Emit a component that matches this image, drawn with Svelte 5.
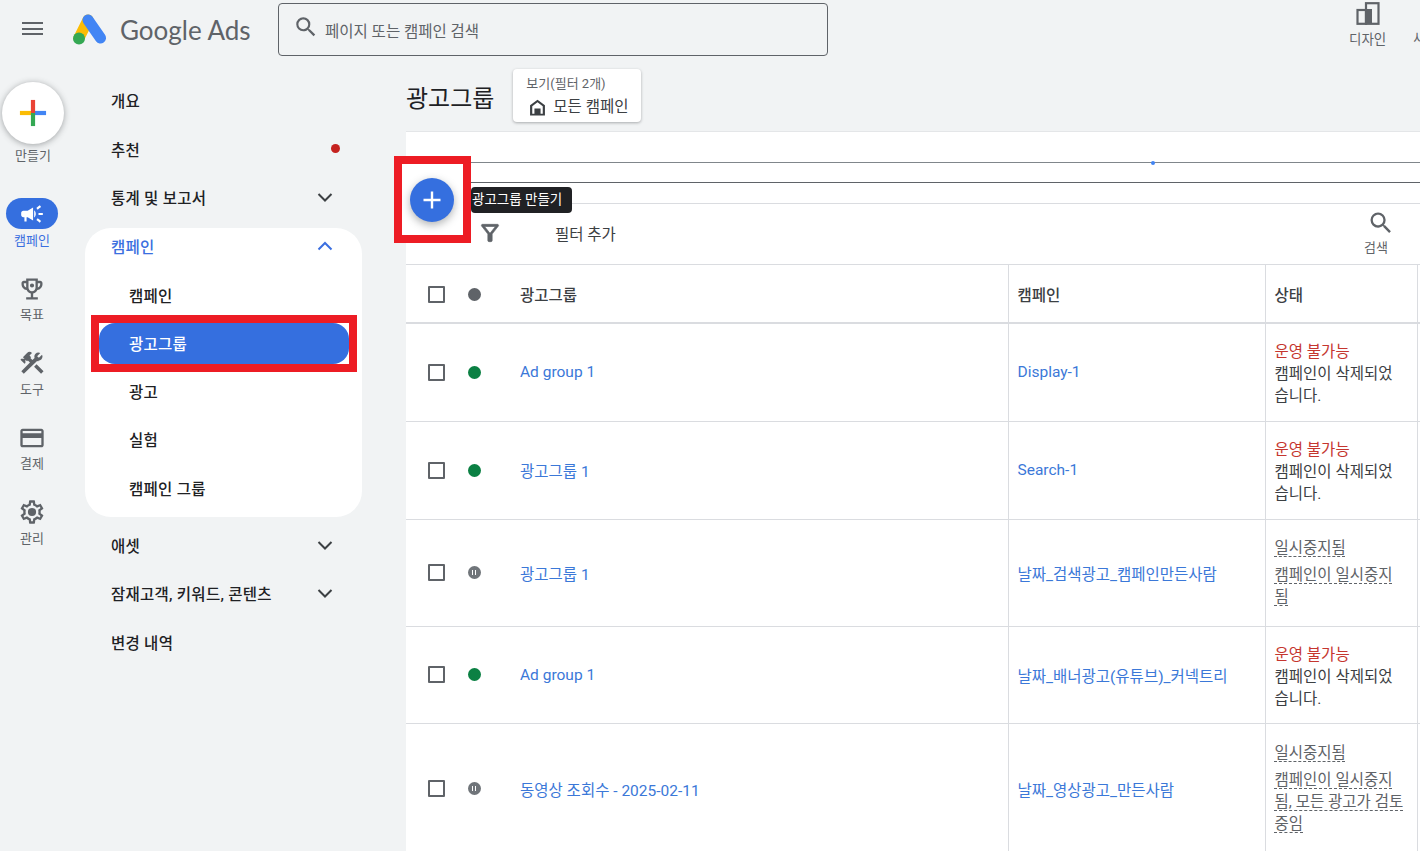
<script>
  const railItems = [
    { label: "목표", icon: "trophy" },
    { label: "도구", icon: "tools" },
    { label: "결제", icon: "card" },
    { label: "관리", icon: "gear" },
  ];

  const icons = {
    search: "M15.5 14h-.79l-.28-.27A6.47 6.47 0 0 0 16 9.5 6.5 6.5 0 1 0 9.5 16c1.61 0 3.09-.59 4.23-1.57l.27.28v.79l5 4.99L20.49 19l-4.99-5zm-6 0C7.01 14 5 11.99 5 9.5S7.01 5 9.5 5 14 7.01 14 9.5 11.99 14 9.5 14z",
    campaign: "M18 11v2h4v-2h-4zm-2 6.61c.96.71 2.21 1.65 3.2 2.39.4-.53.8-1.07 1.2-1.6-.99-.74-2.24-1.68-3.2-2.4-.4.54-.8 1.08-1.2 1.61zM20.4 5.6c-.4-.53-.8-1.07-1.2-1.6-.99.74-2.24 1.68-3.2 2.4.4.53.8 1.07 1.2 1.6.96-.72 2.21-1.65 3.2-2.4zM4 9c-1.1 0-2 .9-2 2v2c0 1.1.9 2 2 2h1v4h2v-4h1l5 3V6L8 9H4zm11.5 3c0-1.33-.58-2.53-1.5-3.35v6.69c.92-.81 1.5-2.01 1.5-3.34z",
    trophy: "M19 5h-2V3H7v2H5c-1.1 0-2 .9-2 2v1c0 2.55 1.92 4.63 4.39 4.94.63 1.5 1.98 2.63 3.61 2.96V19H7v2h10v-2h-4v-3.1c1.63-.33 2.98-1.46 3.61-2.96C19.08 12.63 21 10.55 21 8V7c0-1.1-.9-2-2-2zM5 8V7h2v3.82C5.84 10.4 5 9.3 5 8zm7 6c-1.65 0-3-1.35-3-3V5h6v6c0 1.65-1.35 3-3 3zm7-6c0 1.3-.84 2.4-2 2.82V7h2v1zM12 7.2a1.8 1.8 0 1 0 0 3.6 1.8 1.8 0 0 0 0-3.6z",
    tools: "M13.78 15.3l6 6 2.11-2.16-6-6zM17.5 10c1.93 0 3.5-1.57 3.5-3.5 0-.58-.16-1.12-.41-1.6l-2.7 2.7-1.49-1.49 2.7-2.7c-.48-.25-1.02-.41-1.6-.41C15.57 3 14 4.57 14 6.5c0 .41.08.8.21 1.16l-1.85 1.85-1.78-1.78.71-.71-1.41-1.41L12 3.49a3 3 0 0 0-4.24 0L4.22 7.03l1.41 1.41H2.81l-.71.71 3.54 3.54.71-.71V9.15l1.41 1.41.71-.71 1.78 1.78-7.41 7.41 2.12 2.12L16.34 10.3c.36.13.75.2 1.16.2z",
    card: "M20 4H4c-1.11 0-1.99.89-1.99 2L2 18c0 1.11.89 2 2 2h16c1.11 0 2-.89 2-2V6c0-1.11-.89-2-2-2zm0 14H4v-6h16v6zm0-10H4V6h16v2z",
    gear: "M19.43 12.98c.04-.32.07-.64.07-.98 0-.34-.03-.66-.07-.98l2.11-1.65c.19-.15.24-.42.12-.64l-2-3.46c-.09-.16-.26-.25-.44-.25-.06 0-.12.01-.17.03l-2.49 1c-.52-.4-1.08-.73-1.69-.98l-.38-2.65C14.46 2.18 14.25 2 14 2h-4c-.25 0-.46.18-.49.42l-.38 2.65c-.61.25-1.17.59-1.69.98l-2.49-1c-.06-.02-.12-.03-.18-.03-.17 0-.34.09-.43.25l-2 3.46c-.13.22-.07.49.12.64l2.11 1.65c-.04.32-.07.65-.07.98 0 .33.03.66.07.98l-2.11 1.65c-.19.15-.24.42-.12.64l2 3.46c.09.16.26.25.44.25.06 0 .12-.01.17-.03l2.49-1c.52.4 1.08.73 1.69.98l.38 2.65c.03.24.24.42.49.42h4c.25 0 .46-.18.49-.42l.38-2.65c.61-.25 1.17-.59 1.69-.98l2.49 1c.06.02.12.03.18.03.17 0 .34-.09.43-.25l2-3.46c.12-.22.07-.49-.12-.64l-2.11-1.65zm-1.98-1.71c.04.31.05.52.05.73 0 .21-.02.43-.05.73l-.14 1.13.89.7 1.08.84-.7 1.21-1.27-.51-1.04-.42-.9.68c-.43.32-.84.56-1.25.73l-1.06.43-.16 1.13-.2 1.35h-1.4l-.19-1.35-.16-1.13-1.06-.43c-.43-.18-.83-.41-1.23-.71l-.91-.7-1.06.43-1.27.51-.7-1.21 1.08-.84.89-.7-.14-1.13c-.03-.31-.05-.54-.05-.74s.02-.43.05-.73l.14-1.13-.89-.7-1.08-.84.7-1.21 1.27.51 1.04.42.9-.68c.43-.32.84-.56 1.25-.73l1.06-.43.16-1.13.2-1.35h1.39l.19 1.35.16 1.13 1.06.43c.43.18.83.41 1.23.71l.91.7 1.06-.43 1.27-.51.7 1.21-1.07.85-.89.7.14 1.13zM12 8.500a3.500 3.500 0 1 0 0 7 3.500 3.500 0 0 0 0-7z",
    funnel: "M7 6h10l-5.01 6.3L7 6zm-2.75-.39C6.27 8.2 10 13 10 13v6c0 .55.45 1 1 1h2c.55 0 1-.45 1-1v-6s3.72-4.8 5.74-7.39A1 1 0 0 0 18.95 4H5.04c-.83 0-1.3.95-.79 1.61z",
    home: "M12 3L3.5 9.5V21h17V9.500L12 3zM6 19v-8.300L12 6l6 4.700V19h-2.500v-6h-7v6z",
  };

  const topNav = [
    { label: "개요" },
    { label: "추천", dot: true },
    { label: "통계 및 보고서", chevron: true },
  ];
  const subNav = ["캠페인", "광고그룹", "광고", "실험", "캠페인 그룹"];
  const bottomNav = [
    { label: "애셋", chevron: true },
    { label: "잠재고객, 키워드, 콘텐츠", chevron: true },
    { label: "변경 내역" },
  ];

  const removed = { kind: "bad", title: "운영 불가능", lines: ["캠페인이 삭제되었습니다."] };
  const rows = [
    { h: 98, state: "on", name: "Ad group 1", campaign: "Display-1", status: removed },
    { h: 98, state: "on", name: "광고그룹 1", campaign: "Search-1", status: removed },
    { h: 107, state: "pause", name: "광고그룹 1", campaign: "날짜_검색광고_캠페인만든사람",
      status: { kind: "paused", title: "일시중지됨", lines: ["캠페인이 일시중지됨"] } },
    { h: 97, state: "on", name: "Ad group 1", campaign: "날짜_배너광고(유튜브)_커넥트리", status: removed },
    { h: 131, state: "pause", name: "동영상 조회수 - 2025-02-11", campaign: "날짜_영상광고_만든사람",
      status: { kind: "paused", title: "일시중지됨", lines: ["캠페인이 일시중지됨, 모든 광고가 검토 중임"] } },
  ];
</script>

{#snippet icon(name, size, cls = "")}
  <svg class={cls} width={size} height={size} viewBox="0 0 24 24" fill="currentColor" fill-rule="evenodd" aria-hidden="true"><path d={icons[name]} /></svg>
{/snippet}

{#snippet chevron(up = false)}
  <svg class="chev" width="18" height="18" viewBox="0 0 18 18" fill="none" stroke="currentColor" stroke-width="2"><path d={up ? "M2.5 12.5 9 6l6.5 6.5" : "M2.5 6 9 12.5 15.5 6"} /></svg>
{/snippet}

<div class="page">
  <header class="topbar">
    <button class="menu" aria-label="메뉴"><span></span><span></span><span></span></button>
    <svg class="logo" width="34" height="31" viewBox="0 0 34 31">
      <path d="M15 6 6 24" stroke="#fbbc04" stroke-width="11" stroke-linecap="round" />
      <path d="M15 6l12.5 18" stroke="#4285f4" stroke-width="11" stroke-linecap="round" />
      <circle cx="6" cy="24.500" r="6" fill="#34a853" />
    </svg>
    <div class="brand">Google Ads</div>
    <div class="searchbox">
      {@render icon("search", 26, "search-ico")}
      <span>페이지 또는 캠페인 검색</span>
    </div>
    <div class="top-actions">
      <div class="top-action">
        <svg width="24" height="23" viewBox="0 0 24 23" fill="none" stroke="#5f6368" stroke-width="2.200">
          <rect x="10" y="1.200" width="12.500" height="20.600" />
          <rect x="1.500" y="8" width="8.500" height="13.800" />
          <rect x="10" y="7" width="6" height="15" fill="#5f6368" stroke="none" />
        </svg>
        <span>디자인</span>
      </div>
      <div class="top-action cut"><span>새로고침</span></div>
    </div>
  </header>

  <div class="body">
    <aside class="rail">
      <button class="create" aria-label="만들기">
        <svg width="28" height="28" viewBox="0 0 30 30" stroke-width="4.500">
          <path d="M1 15h14" stroke="#fbbc04" />
          <path d="M15 15h14" stroke="#4285f4" />
          <path d="M15 1v14" stroke="#ea4335" />
          <path d="M15 15v14" stroke="#34a853" />
        </svg>
      </button>
      <div class="create-label">만들기</div>
      <div class="rail-item active">
        <div class="pill">{@render icon("campaign", 26)}</div>
        <span>캠페인</span>
      </div>
      {#each railItems as item}
        <div class="rail-item">
          <div class="pill">{@render icon(item.icon, 28)}</div>
          <span>{item.label}</span>
        </div>
      {/each}
    </aside>

    <nav class="nav">
      {#each topNav as item}
        <div class="nav-item">
          <span>{item.label}</span>
          {#if item.dot}<i class="red-dot"></i>{/if}
          {#if item.chevron}{@render chevron()}{/if}
        </div>
      {/each}
      <div class="panel">
        <div class="panel-head">
          <span>캠페인</span>
          {@render chevron(true)}
        </div>
        {#each subNav as label}
          <div class="sub-item" class:selected={label === "광고그룹"}>
            <span>{label}</span>
          </div>
        {/each}
      </div>
      {#each bottomNav as item}
        <div class="nav-item">
          <span>{item.label}</span>
          {#if item.chevron}{@render chevron()}{/if}
        </div>
      {/each}
    </nav>

    <main class="main">
      <div class="title-row">
        <h1>광고그룹</h1>
        <button class="view-btn">
          <span class="view-small">보기(필터 2개)</span>
          <span class="view-big">{@render icon("home", 21)}모든 캠페인</span>
        </button>
      </div>

      <section class="sheet">
        <div class="chart">
          <div class="line"></div>
          <div class="line second"></div>
          <i class="chart-dot"></i>
        </div>
        <div class="filter-row">
          {@render icon("funnel", 26, "funnel")}
          <span class="filter-add">필터 추가</span>
          <div class="table-search">
            {@render icon("search", 28, "search-shift")}
            <span>검색</span>
          </div>
        </div>

        <table>
          <colgroup>
            <col style="width:50px" />
            <col style="width:50px" />
            <col style="width:502px" />
            <col style="width:257px" />
            <col style="width:152px" />
            <col />
          </colgroup>
          <thead>
            <tr>
              <th><i class="check"></i></th>
              <th><i class="dot gray"></i></th>
              <th class="divide">광고그룹</th>
              <th class="divide">캠페인</th>
              <th class="divide">상태</th>
              <th></th>
            </tr>
          </thead>
          <tbody>
            {#each rows as row}
              <tr style="height:{row.h}px">
                <td><i class="check"></i></td>
                <td>
                  {#if row.state === "on"}
                    <i class="dot green"></i>
                  {:else}
                    <i class="dot pause"></i>
                  {/if}
                </td>
                <td class="divide"><span class="link">{row.name}</span></td>
                <td class="divide"><span class="link">{row.campaign}</span></td>
                <td class="divide status">
                  {#if row.status.kind === "bad"}
                    <div class="st-bad">{row.status.title}</div>
                    <div>{row.status.lines[0]}</div>
                  {:else}
                    <div class="st-paused-title"><span>{row.status.title}</span></div>
                    <div class="st-paused"><span>{row.status.lines[0]}</span></div>
                  {/if}
                </td>
                <td></td>
              </tr>
            {/each}
          </tbody>
        </table>
      </section>

      <div class="fab-mark"></div>
      <button class="fab" aria-label="광고그룹 만들기">
        <svg width="24" height="24" viewBox="0 0 24 24" fill="none" stroke="#fff" stroke-width="2.400"><path d="M12 3.500v17M3.500 12h17" /></svg>
      </button>
      <div class="tooltip">광고그룹 만들기</div>
    </main>
  </div>
</div>

<style>
  :global(body) {
    margin: 0;
    overflow: hidden;
    background: #f1f3f4;
  }

  .page {
    width: 1420px;
    height: 851px;
    overflow: hidden;
    background: #f1f3f4;
    color: #202124;
    font-family: Roboto, "Noto Sans CJK KR", sans-serif;
    font-size: 15.500px;
  }

  button {
    border: none;
    padding: 0;
    font: inherit;
    color: inherit;
    background: none;
  }

  .topbar {
    height: 68px;
    display: flex;
    align-items: flex-start;
    position: relative;
  }

  .menu {
    width: 21px;
    margin: 22px 0 0 22px;
    display: flex;
    flex-direction: column;
    gap: 3.500px;
  }

  .menu span {
    height: 2px;
    background: #5f6368;
  }

  .logo {
    margin: 14px 0 0 30px;
  }

  .brand {
    margin: 11px 0 0 13px;
    width: 158px;
    font-family: Lato, Roboto, sans-serif;
    font-size: 26px;
    line-height: 38px;
    color: #5f6368;
  }

  .searchbox {
    width: 548px;
    height: 51px;
    margin-top: 3px;
    border: 1px solid #5f6368;
    border-radius: 4px;
    display: flex;
    align-items: center;
    color: #5f6368;
  }

  .searchbox span {
    margin: 1px 0 0 6px;
  }

  :global(.search-ico) {
    margin: -6px 0 0 14px;
  }

  .top-actions {
    margin-left: auto;
    display: flex;
    width: 71px;
    gap: 27px;
    flex-shrink: 0;
    overflow: hidden;
  }

  .top-action {
    display: flex;
    flex-direction: column;
    align-items: center;
    gap: 3px;
    padding-top: 2px;
    font-size: 13.500px;
    color: #5f6368;
    flex-shrink: 0;
  }

  .top-action.cut {
    padding-top: 27px;
  }

  .body {
    display: flex;
    height: 783px;
  }

  .rail {
    width: 85px;
    flex-shrink: 0;
    display: flex;
    flex-direction: column;
    align-items: flex-start;
    padding-top: 14px;
  }

  .create {
    width: 62px;
    height: 62px;
    margin-left: 2px;
    border-radius: 50%;
    background: #fff;
    box-shadow: 0 1px 6px rgba(60, 64, 67, 0.45);
    display: flex;
    align-items: center;
    justify-content: center;
  }

  .create-label {
    width: 66px;
    text-align: center;
    font-size: 13px;
    line-height: 18px;
    margin-top: 3px;
    color: #5f6368;
  }

  .rail-item {
    width: 64px;
    display: flex;
    flex-direction: column;
    align-items: center;
    color: #5f6368;
    font-size: 13px;
    line-height: 18px;
    height: 74.500px;
  }

  .rail-item .pill {
    height: 31px;
    width: 52px;
    border-radius: 16px;
    display: flex;
    align-items: center;
    justify-content: center;
    margin-bottom: 2px;
  }

  .rail-item.active {
    margin-top: 33px;
    height: 75px;
    color: #3b6fe0;
  }

  .rail-item.active .pill {
    background: #356fdf;
    color: #fff;
    margin-bottom: 3px;
  }

  .nav {
    width: 321px;
    flex-shrink: 0;
    padding-top: 8px;
    box-sizing: border-box;
  }

  .nav-item {
    height: 48.500px;
    width: 277px;
    box-sizing: border-box;
    padding: 0 28px 0 26px;
    display: flex;
    align-items: center;
    justify-content: space-between;
    font-weight: 500;
    letter-spacing: 0.25px;
  }

  .chev {
    color: #3c4043;
    flex-shrink: 0;
  }

  .red-dot {
    width: 9px;
    height: 9px;
    margin-right: -6px;
    border-radius: 50%;
    background: #c5221f;
  }

  .panel {
    width: 277px;
    height: 289px;
    box-sizing: border-box;
    margin: 6px 0 4px;
    background: #fff;
    border-radius: 26px;
  }

  .panel-head {
    height: 36px;
    margin-bottom: 7px;
    padding: 0 28px 0 26px;
    display: flex;
    align-items: center;
    justify-content: space-between;
    font-weight: 500;
    letter-spacing: 0.25px;
    color: #3b6fe0;
  }

  .panel-head .chev {
    color: #3b6fe0;
  }

  .sub-item {
    height: 48.250px;
    display: flex;
    align-items: center;
    padding-left: 44px;
    font-weight: 500;
    letter-spacing: 0.25px;
    position: relative;
  }

  .sub-item.selected {
    color: #fff;
  }

  .sub-item.selected::before {
    content: "";
    position: absolute;
    left: 6px;
    right: 5px;
    top: -4px;
    bottom: -5px;
    background: #fff;
    border: 8px solid #ed1c24;
    box-sizing: border-box;
  }

  .sub-item.selected::after {
    content: "";
    position: absolute;
    left: 14px;
    right: 13px;
    top: 4px;
    bottom: 3px;
    background: #356fdf;
    border-radius: 16px;
  }

  .sub-item span {
    position: relative;
    z-index: 1;
  }

  .main {
    flex: 1;
    min-width: 0;
    position: relative;
  }

  .title-row {
    height: 63px;
    display: flex;
    align-items: flex-start;
    gap: 19px;
    border-bottom: 1px solid #e4e6e8;
    box-sizing: content-box;
  }

  h1 {
    margin: 13px 0 0;
    font-size: 24px;
    line-height: 36px;
    font-weight: 400;
  }

  .view-btn {
    margin-top: 1px;
    width: 128px;
    height: 53px;
    background: #fff;
    border-radius: 4px;
    box-shadow: 0 1px 3px rgba(60, 64, 67, 0.4);
    display: flex;
    flex-direction: column;
    align-items: flex-start;
    padding: 6px 0 0 13px;
    box-sizing: border-box;
  }

  .view-small {
    font-size: 13px;
    line-height: 18px;
    color: #5f6368;
  }

  .view-big {
    display: flex;
    align-items: center;
    gap: 5px;
    font-size: 15.500px;
    line-height: 24px;
    margin: 2px 0 0 1px;
    color: #3c4043;
  }

  .sheet {
    background: #fff;
  }

  .chart {
    height: 72px;
    padding-top: 30px;
    box-sizing: border-box;
    border-bottom: 1px solid #dadce0;
    position: relative;
  }

  .line {
    height: 1px;
    background: #80868b;
  }

  .line.second {
    margin-top: 19px;
    background: #5f6368;
  }

  .chart-dot {
    position: absolute;
    left: 745px;
    top: 29px;
    width: 4px;
    height: 4px;
    border-radius: 50%;
    background: #4285f4;
  }

  .filter-row {
    height: 61px;
    box-sizing: border-box;
    border-bottom: 1px solid #dadce0;
    display: flex;
    align-items: flex-start;
    position: relative;
    color: #5f6368;
  }

  :global(.funnel) {
    margin: 16px 0 0 71px;
    stroke: currentColor;
    stroke-width: 0.6;
  }

  .filter-add {
    margin: 20px 0 0 52px;
    line-height: 22px;
    color: #3c4043;
  }

  .table-search {
    margin-left: auto;
    padding: 5px 30px 0 0;
    display: flex;
    flex-direction: column;
    align-items: center;
    font-size: 13px;
    line-height: 18px;
    gap: 2px;
  }

  :global(.search-shift) {
    position: relative;
    left: 5px;
  }

  table {
    width: 100%;
    table-layout: fixed;
    border-collapse: collapse;
  }

  thead tr {
    height: 58px;
    border-bottom: 2px solid #dadce0;
  }

  tbody tr {
    border-bottom: 1px solid #dadce0;
  }

  th {
    text-align: left;
    font-weight: 500;
    padding: 1px 0 0 12px;
    color: #3c4043;
  }

  td {
    padding: 0 0 0 12px;
    vertical-align: middle;
  }

  th:first-child,
  td:first-child {
    padding-left: 22px;
  }

  .divide {
    border-right: 1px solid #dadce0;
  }

  th:nth-child(3),
  td:nth-child(3) {
    padding-left: 14px;
  }

  th:nth-child(4),
  td:nth-child(4) {
    padding-left: 9px;
  }

  th:nth-child(5),
  td:nth-child(5) {
    padding-left: 9px;
    padding-right: 13px;
  }

  .check {
    display: block;
    width: 13px;
    height: 13px;
    border: 2px solid #5f6368;
    border-radius: 1px;
  }

  .dot {
    display: block;
    width: 13px;
    height: 13px;
    border-radius: 50%;
    position: relative;
  }

  .dot.gray {
    background: #5f6368;
  }

  .dot.green {
    background: #0b8043;
  }

  .dot.pause {
    background: #70757a;
  }

  .dot.pause::after {
    content: "";
    position: absolute;
    left: 4px;
    top: 4px;
    width: 2px;
    height: 5px;
    border-left: 1.500px solid #fff;
    border-right: 1.500px solid #fff;
  }

  .link {
    color: #3b78d8;
  }

  .status {
    line-height: 22px;
    color: #3c4043;
    word-break: break-all;
  }

  .st-bad {
    color: #c5362f;
    margin-top: 4px;
  }

  .st-paused-title,
  .st-paused {
    color: #5f6368;
  }

  .st-paused-title {
    margin-bottom: 5px;
  }

  .st-paused-title span,
  .st-paused span {
    text-decoration: underline dashed 1px #5f6368;
    text-underline-offset: 3px;
  }

  .fab-mark {
    position: absolute;
    left: -12px;
    top: 88px;
    width: 77px;
    height: 87px;
    box-sizing: border-box;
    border: 8px solid #ed1c24;
    background: #fff;
  }

  .fab {
    position: absolute;
    left: 4px;
    top: 110px;
    width: 44px;
    height: 44px;
    border-radius: 50%;
    background: #356fdf;
    box-shadow: 0 3px 8px rgba(60, 64, 67, 0.4);
    display: flex;
    align-items: center;
    justify-content: center;
  }

  .tooltip {
    position: absolute;
    left: 65px;
    top: 119px;
    width: 101px;
    height: 26px;
    box-sizing: border-box;
    padding-left: 1px;
    border-radius: 4px;
    background: #202124;
    color: #fff;
    font-size: 13.500px;
    line-height: 24px;
    white-space: nowrap;
  }
</style>
